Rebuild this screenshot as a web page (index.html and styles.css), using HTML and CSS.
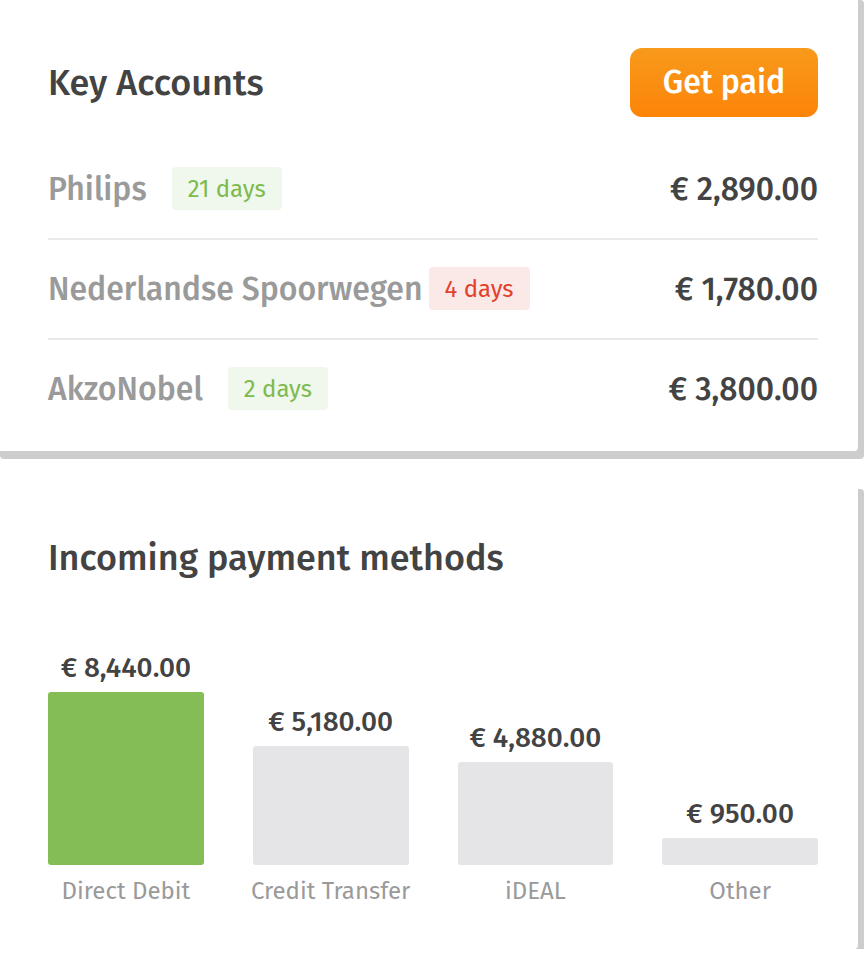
FILE: index.html
```html
<!DOCTYPE html>
<html lang="en">
<head>
<meta charset="utf-8">
<title>Dashboard</title>
<link rel="stylesheet" href="styles.css">
</head>
<body>
<div class="stack">
  <section class="card accounts">
    <header class="card-head">
      <h2 class="card-title">Key Accounts</h2>
      <button class="btn-primary" type="button">Get paid</button>
    </header>
    <ul class="account-list">
      <li class="account-row">
        <span class="account-name">Philips</span>
        <span class="badge badge-ok">21 days</span>
        <span class="account-amount">€ 2,890.00</span>
      </li>
      <li class="account-row">
        <span class="account-name account-name-tight">Nederlandse Spoorwegen</span>
        <span class="badge badge-late">4 days</span>
        <span class="account-amount">€ 1,780.00</span>
      </li>
      <li class="account-row">
        <span class="account-name">AkzoNobel</span>
        <span class="badge badge-ok">2 days</span>
        <span class="account-amount">€ 3,800.00</span>
      </li>
    </ul>
  </section>

  <section class="card methods">
    <h2 class="card-title">Incoming payment methods</h2>
    <div class="chart">
      <div class="chart-col">
        <span class="chart-value">€ 8,440.00</span>
        <div class="chart-bar chart-bar-active" style="height:173px"></div>
        <span class="chart-label">Direct Debit</span>
      </div>
      <div class="chart-col">
        <span class="chart-value">€ 5,180.00</span>
        <div class="chart-bar" style="height:119px"></div>
        <span class="chart-label">Credit Transfer</span>
      </div>
      <div class="chart-col">
        <span class="chart-value">€ 4,880.00</span>
        <div class="chart-bar" style="height:103px"></div>
        <span class="chart-label">iDEAL</span>
      </div>
      <div class="chart-col">
        <span class="chart-value">€ 950.00</span>
        <div class="chart-bar" style="height:27px"></div>
        <span class="chart-label">Other</span>
      </div>
    </div>
  </section>
</div>
</body>
</html>
```

FILE: styles.css
```css
* { box-sizing: border-box; }

html, body {
  margin: 0;
  padding: 0;
  background: #ffffff;
}

body {
  font-family: "Fira Sans", "Open Sans", "Noto Sans", sans-serif;
  color: #434343;
  overflow: hidden;
}

.stack {
  display: flex;
  flex-direction: column;
  gap: 28px;
  width: 864px;
  margin: -8px 0 0 -6px;
}

.card {
  background: #ffffff;
  border-radius: 4px;
  box-shadow: 6px 8px 0 #cdcdcd;
  padding: 0 40px 0 54px;
}

.accounts {
  padding-top: 56px;
  padding-bottom: 13px;
}

.card-head {
  display: flex;
  align-items: center;
  justify-content: space-between;
  height: 69px;
}

.card-title {
  margin: 0;
  font-size: 36px;
  line-height: 44px;
  font-weight: 500;
  color: #434343;
}

.btn-primary {
  height: 69px;
  width: 188px;
  border: 0;
  border-radius: 12px;
  background: linear-gradient(180deg, #f89a1c 0%, #fc8408 100%);
  color: #ffffff;
  font-family: inherit;
  font-size: 32px;
  font-weight: 500;
  padding: 0 0 2px;
  cursor: pointer;
}

.account-list {
  list-style: none;
  margin: 23px 0 0;
  padding: 0;
}

.account-row {
  display: flex;
  align-items: center;
  padding: 27px 0 28px;
  border-bottom: 2px solid #e9e9ec;
}

.account-row:last-child {
  border-bottom: 0;
}

.account-name {
  font-size: 32px;
  line-height: 40px;
  font-weight: 500;
  color: #9a9a9a;
  margin-right: 25px;
  white-space: nowrap;
}

.account-name-tight {
  margin-right: 6px;
}

.badge {
  display: inline-flex;
  align-items: center;
  height: 43px;
  padding: 0 16px;
  border-radius: 4px;
  font-size: 24px;
  font-weight: 400;
  white-space: nowrap;
}

.badge-ok {
  background: #f0f7ec;
  color: #7cbb4c;
}

.badge-late {
  background: #fbe9e8;
  color: #e2412b;
}

.account-amount {
  margin-left: auto;
  font-size: 32px;
  line-height: 40px;
  font-weight: 500;
  color: #434343;
  white-space: nowrap;
}

.methods {
  margin-top: 2px;
  padding-top: 55px;
  padding-bottom: 43px;
}

.chart {
  display: grid;
  grid-template-columns: repeat(4, minmax(0, 1fr));
  column-gap: 49px;
  align-items: end;
  margin-top: 72px;
}

.chart-col {
  display: flex;
  flex-direction: column;
  align-items: center;
}

.chart-value {
  font-size: 28px;
  line-height: 32px;
  font-weight: 500;
  color: #434343;
  margin-bottom: 8px;
  white-space: nowrap;
}

.chart-bar {
  width: 100%;
  border-radius: 3px;
  background: #e5e4e7;
}

.chart-bar-active {
  background: #84bc55;
}

.chart-label {
  margin-top: 11px;
  font-size: 24px;
  line-height: 30px;
  font-weight: 400;
  color: #9a9a9a;
  white-space: nowrap;
}
```
